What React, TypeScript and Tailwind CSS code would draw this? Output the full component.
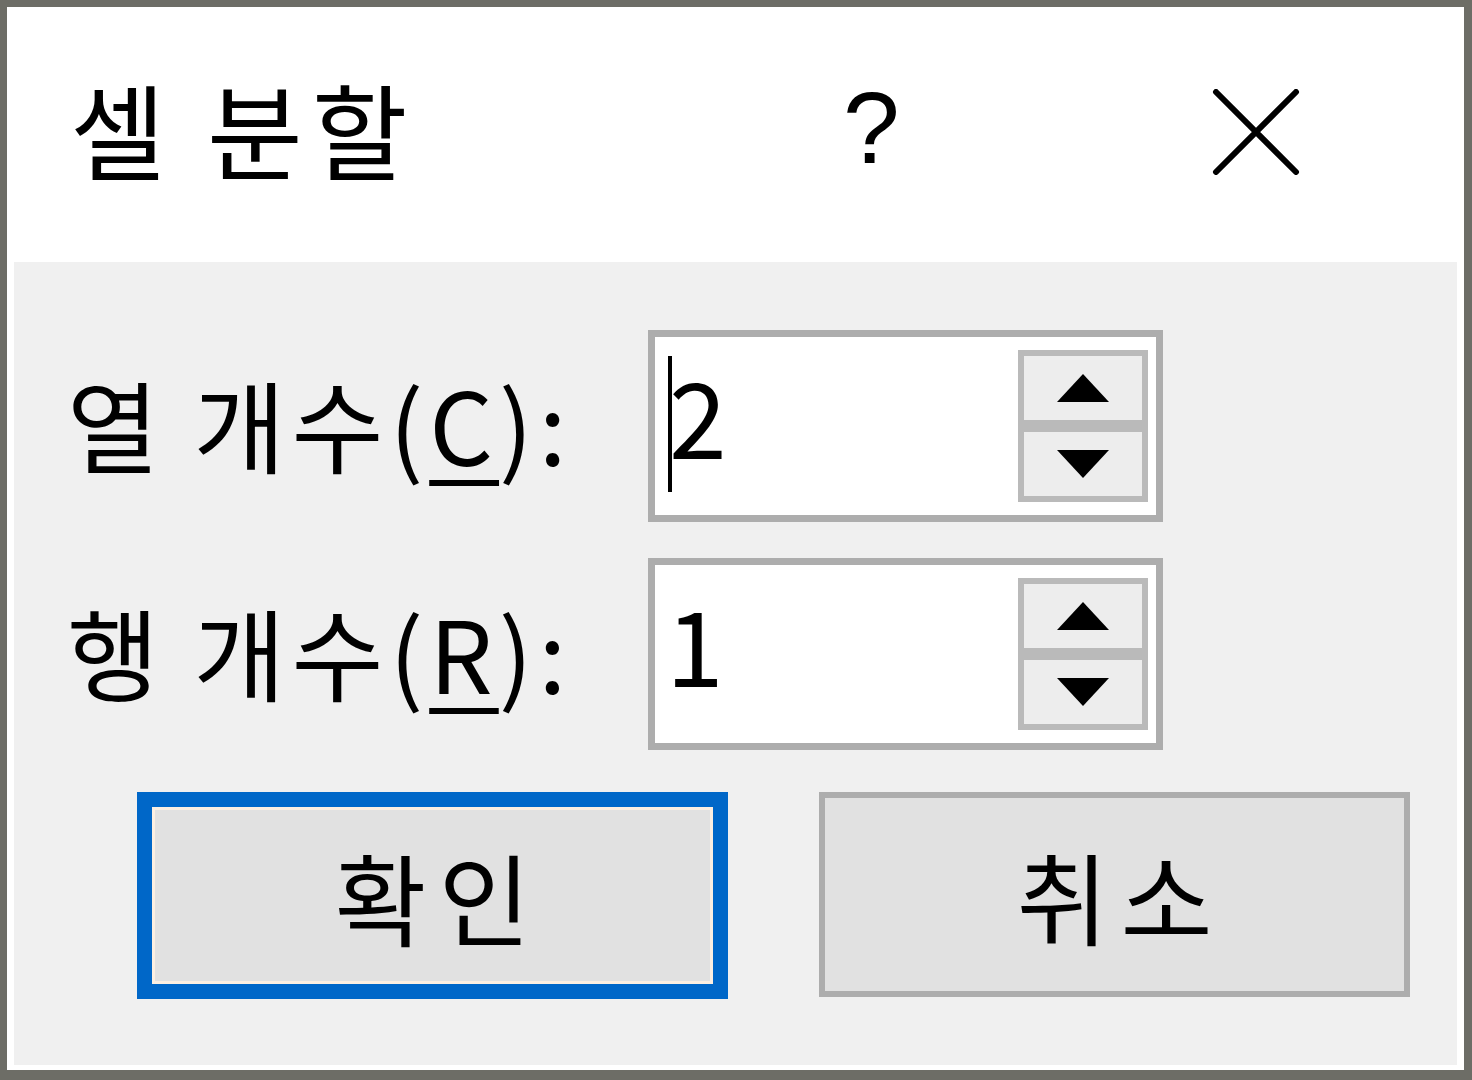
import { type ReactNode } from "react";

const FONT = "font-['Noto_Sans_CJK_KR','Noto_Sans',sans-serif]";

function SpinButton({ dir }: { dir: "up" | "down" }) {
  return (
    <div className="flex h-[76px] w-[130px] items-center justify-center border-[6px] border-[#bababa] bg-[#ededed]">
      <svg width="54" height="30" viewBox="0 0 54 30">
        {dir === "up" ? (
          <polygon points="27,1 53,29 1,29" fill="#000" />
        ) : (
          <polygon points="1,1 53,1 27,29" fill="#000" />
        )}
      </svg>
    </div>
  );
}

function SpinBox({ children }: { children: ReactNode }) {
  return (
    <div className="flex h-[192px] w-[515px] border-[7px] border-[#adadad] bg-white">
      <div className="flex flex-1 items-center pl-[13px] text-[104px] leading-none text-black">
        {children}
      </div>
      <div className="flex flex-col justify-center pr-[8px]">
        <SpinButton dir="up" />
        <SpinButton dir="down" />
      </div>
    </div>
  );
}

function Label({ text, hotkey }: { text: string; hotkey: string }) {
  return (
    <div className="flex items-center pl-[53px] pb-[6px] text-[100px] leading-none tracking-[6px] text-black">
      <span className="whitespace-pre">
        {text}(
        <u className="decoration-[6px] underline-offset-[14px]">{hotkey}</u>
        ):
      </span>
    </div>
  );
}

export default function App() {
  return (
    <div
      className={`h-[1080px] w-[1472px] bg-[#6d6d66] pb-[10px] pl-[7px] pr-[8px] pt-[7px] ${FONT}`}
    >
      <div className="flex h-full flex-col bg-white">
        <div className="flex h-[255px] items-center pb-[14px]">
          <div className="w-[800px] pl-[63px] text-[104px] leading-none tracking-[9px] text-black">
            셀 분할
          </div>
          <div className="ml-[36px] font-['Liberation_Sans',sans-serif] text-[102px] leading-none text-black">
            ?
          </div>
          <svg
            className="ml-[312px] mt-[8px]"
            width="88"
            height="86"
            viewBox="0 0 88 86"
          >
            <path
              d="M4 3 L84 83 M84 3 L4 83"
              stroke="#000"
              strokeWidth="6"
              strokeLinecap="round"
            />
          </svg>
        </div>

        <div className="mx-[7px] mb-[5px] flex flex-1 flex-col bg-[#f0f0f0] pt-[68px]">
          <div className="grid grid-cols-[634px_515px] gap-y-[36px]">
            <Label text="열 개수" hotkey="C" />
            <SpinBox>
              <span className="mb-[4px] h-[136px] w-[4px] bg-black" />
              <span className="-ml-[3px] mb-[24px]">2</span>
            </SpinBox>
            <Label text="행 개수" hotkey="R" />
            <SpinBox>
              <span className="-ml-[2px] mb-[24px]">1</span>
            </SpinBox>
          </div>

          <div className="mt-[42px] flex gap-[91px] pl-[123px]">
            <button className="flex h-[207px] w-[591px] items-center justify-center border-[15px] border-[#0067c8] bg-[#e1e1e1] pl-[12px] text-[100px] leading-none tracking-[12px] text-black outline-[3px] outline-offset-[-18px] outline-[#fcefe2] [outline-style:solid]">
              확인
            </button>
            <button className="flex h-[205px] w-[591px] items-center justify-center border-[6px] border-[#adadad] bg-[#e1e1e1] pl-[12px] text-[100px] leading-none tracking-[12px] text-black">
              취소
            </button>
          </div>
        </div>
      </div>
    </div>
  );
}
